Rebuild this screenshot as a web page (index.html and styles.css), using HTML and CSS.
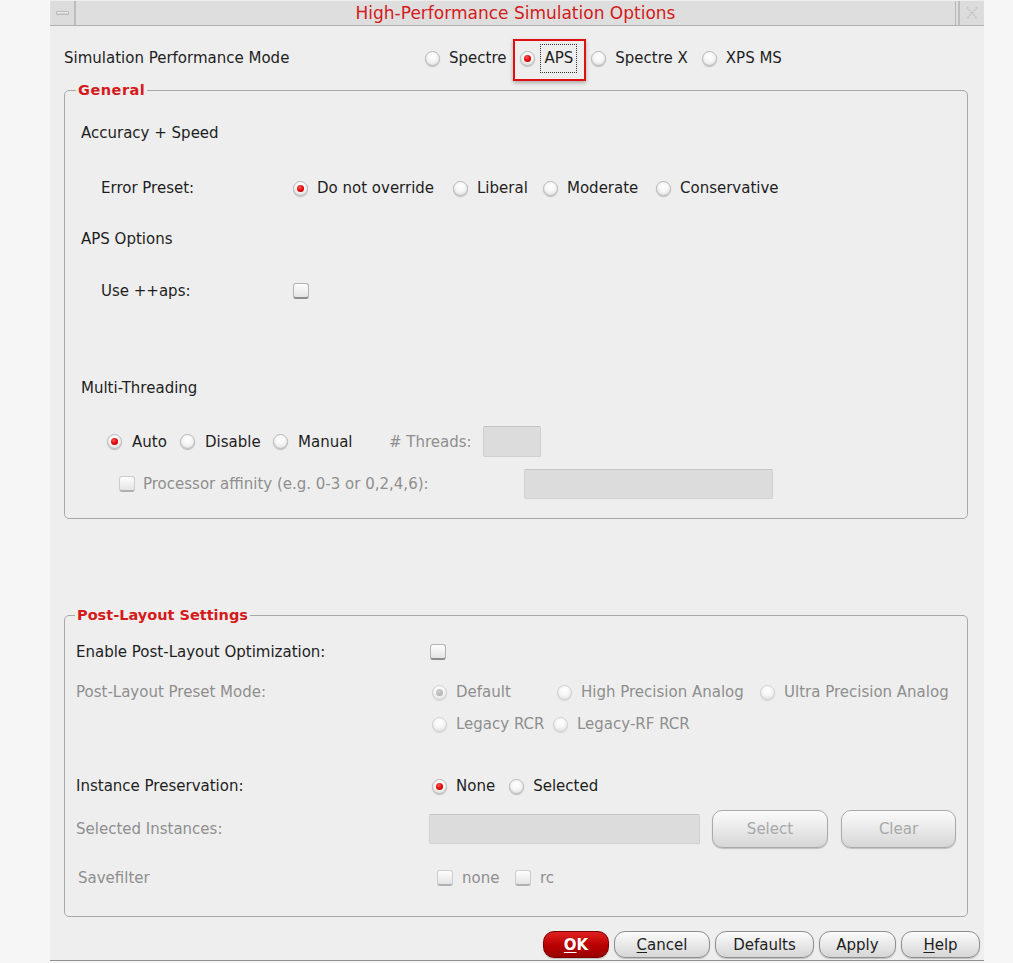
FILE: index.html
```html
<!DOCTYPE html>
<html lang="en">
<head>
    <meta charset="UTF-8">
    <title>High-Performance Simulation Options</title>
    <link rel="stylesheet" href="styles.css">
</head>
<body>

    <div class="window">

        <!-- Title bar -->
        <div class="titlebar">
            <div class="tb-btn tb-menu"><span class="tb-bar"></span></div>
            <div class="tb-title">High-Performance Simulation Options</div>
            <div class="tb-btn tb-close">
                <svg width="22" height="22" viewBox="0 0 22 22">
                    <path d="M6 5 L10.5 11 L6 17 M16 5 L11.5 11 L16 17" fill="none" stroke="#c4c4c4" stroke-width="1.6" stroke-dasharray="2 1"/>
                </svg>
            </div>
        </div>

        <div class="content">

            <!-- Mode selection -->
            <div class="mode-row">
                <span class="mode-label">Simulation Performance Mode</span>
                <div class="choices gap14">
                    <span class="opt"><span class="radio"></span>Spectre</span>
                    <span class="opt mark">
                        <span class="radio on"></span><span class="focus">APS</span>
                        <span class="mark-box"></span>
                    </span>
                    <span class="opt"><span class="radio"></span>Spectre X</span>
                    <span class="opt"><span class="radio"></span>XPS MS</span>
                </div>
            </div>

            <!-- General -->
            <fieldset class="group general">
                <legend>General</legend>

                <div class="row r-acc">Accuracy + Speed</div>

                <div class="row r-err">
                    <span class="sub-label">Error Preset:</span>
                    <div class="choices">
                        <span class="opt w-dno"><span class="radio on"></span>Do not override</span>
                        <span class="opt w-lib"><span class="radio"></span>Liberal</span>
                        <span class="opt w-mod"><span class="radio"></span>Moderate</span>
                        <span class="opt"><span class="radio"></span>Conservative</span>
                    </div>
                </div>

                <div class="row r-aps">APS Options</div>

                <div class="row r-use">
                    <span class="sub-label">Use ++aps:</span>
                    <span class="check"></span>
                </div>

                <div class="row r-mt">Multi-Threading</div>

                <div class="row r-thr">
                    <span class="opt w-auto"><span class="radio on"></span>Auto</span>
                    <span class="opt w-dis"><span class="radio"></span>Disable</span>
                    <span class="opt w-man"><span class="radio"></span>Manual</span>
                    <span class="muted thr-label"># Threads:</span>
                    <span class="field thr-field"></span>
                </div>

                <div class="row r-aff">
                    <span class="opt muted aff-label"><span class="check dim"></span>Processor affinity (e.g. 0-3 or 0,2,4,6):</span>
                    <span class="field aff-field"></span>
                </div>
            </fieldset>

            <!-- Post-Layout -->
            <fieldset class="group post">
                <legend>Post-Layout Settings</legend>

                <div class="prow p-enable">
                    <span>Enable Post-Layout Optimization:</span>
                    <span class="check ctl-check"></span>
                </div>

                <div class="prow p-preset">
                    <span class="muted">Post-Layout Preset Mode:</span>
                    <div class="preset-grid muted">
                        <div class="choices">
                            <span class="opt w-def"><span class="radio dis on"></span>Default</span>
                            <span class="opt w-hpa"><span class="radio dis"></span>High Precision Analog</span>
                            <span class="opt"><span class="radio dis"></span>Ultra Precision Analog</span>
                        </div>
                        <div class="choices">
                            <span class="opt w-rcr"><span class="radio dis"></span>Legacy RCR</span>
                            <span class="opt"><span class="radio dis"></span>Legacy-RF RCR</span>
                        </div>
                    </div>
                </div>

                <div class="prow p-inst">
                    <span>Instance Preservation:</span>
                    <div class="choices ctl-radios gap14">
                        <span class="opt"><span class="radio on"></span>None</span>
                        <span class="opt"><span class="radio"></span>Selected</span>
                    </div>
                </div>

                <div class="prow p-sel">
                    <span class="muted">Selected Instances:</span>
                    <div class="sel-ctl">
                        <span class="field sel-field"></span>
                        <button class="btn dis w-select">Select</button>
                        <button class="btn dis w-clear">Clear</button>
                    </div>
                </div>

                <div class="prow p-save">
                    <span class="muted save-label">Savefilter</span>
                    <div class="choices muted save-ctl">
                        <span class="opt w-none"><span class="check dim"></span>none</span>
                        <span class="opt"><span class="check dim"></span>rc</span>
                    </div>
                </div>
            </fieldset>
        </div>

        <!-- Dialog buttons -->
        <div class="footer">
            <button class="btn ok"><u>O</u>K</button>
            <button class="btn w-cancel"><u>C</u>ancel</button>
            <button class="btn w-defaults">Defaults</button>
            <button class="btn w-apply">Apply</button>
            <button class="btn w-help"><u>H</u>elp</button>
        </div>
    </div>

</body>
</html>
```

FILE: styles.css
```css
/* Reset */
* {
    margin: 0;
    padding: 0;
    box-sizing: border-box;
}

:root {
    --bg-outer: #f6f6f6;
    --bg-window: #eeeeee;
    --text: #1e1e1e;
    --muted: #8e8e8e;
    --red: #d41a1a;
    --line: #a9a9a9;
}

body {
    font-family: "DejaVu Sans", sans-serif;
    font-size: 15px;
    color: var(--text);
    background: var(--bg-outer);
    height: 963px;
    overflow: hidden;
}

/* Window frame */
.window {
    margin-left: 50px;
    width: 934px;
    height: 961px;
    background: var(--bg-window);
    border-bottom: 1px solid #8f8f8f;
    display: flex;
    flex-direction: column;
}

/* Title bar */
.titlebar {
    display: flex;
    height: 25px;
    margin-top: 1px;
    border-bottom: 1px solid #b0b0b0;
    background: #dedede;
}

.tb-btn {
    width: 25px;
    height: 24px;
    display: flex;
    align-items: center;
    justify-content: center;
    background: #dcdcdc;
}

.tb-menu {
    border-right: 2px solid #bdbdbd;
    margin-left: 1px;
}

.tb-bar {
    width: 13px;
    height: 4px;
    border-radius: 1px;
    background: linear-gradient(#f4f4f4, #c6c6c6);
    border: 1px solid #bbbbbb;
}

.tb-close {
    border-left: 2px solid #bdbdbd;
    margin-right: 1px;
    margin-left: 2px;
}

.tb-title {
    flex: 1;
    text-align: center;
    color: var(--red);
    font-size: 17px;
    line-height: 24px;
    border-right: 1px solid #b6b6b6;
}

/* Content */
.content {
    padding: 0 16px 0 14px;
}

.mode-row {
    display: flex;
    align-items: center;
    height: 24px;
    margin-top: 20px;
}

.mode-label {
    width: 361px;
}

.choices {
    display: flex;
    align-items: center;
}

.gap14 {
    gap: 14px;
}

.opt {
    display: inline-flex;
    align-items: center;
    gap: 9px;
    white-space: nowrap;
}

.muted {
    color: var(--muted);
}

/* Radio buttons */
.radio {
    position: relative;
    flex: none;
    width: 15px;
    height: 15px;
    border-radius: 50%;
    border: 1px solid #b8b8b8;
    background: radial-gradient(circle at 50% 35%, #ffffff 0, #f6f6f6 45%, #d9d9d9 100%);
    box-shadow: 0 1px 1px rgba(0, 0, 0, 0.22);
}

.radio.on::after {
    content: "";
    position: absolute;
    left: 3px;
    top: 3px;
    width: 7px;
    height: 7px;
    border-radius: 50%;
    background: radial-gradient(circle at 40% 35%, #ff5a5a 0, #e00000 55%, #a30000 100%);
}

.radio.dis {
    border-color: #cfcfcf;
    box-shadow: 0 1px 1px rgba(0, 0, 0, 0.1);
}

.radio.dis.on::after {
    background: radial-gradient(circle at 40% 35%, #d0d0d0 0, #a6a6a6 100%);
}

/* Checkboxes */
.check {
    flex: none;
    width: 16px;
    height: 16px;
    border-radius: 3px;
    border: 1px solid #b4b4b4;
    border-bottom: 2px solid #8c8c8c;
    background: linear-gradient(#fdfdfd, #e4e4e4);
}

.check.dim {
    border-color: #cdcdcd;
    border-bottom-color: #b0b0b0;
}

/* Focus + annotation box around APS */
.mark {
    position: relative;
    gap: 5px;
}

.focus {
    display: inline-block;
    height: 29px;
    line-height: 27px;
    padding: 0 3px;
    border: 1px dotted #333333;
}

.mark-box {
    position: absolute;
    left: -7px;
    right: -9px;
    top: -5px;
    bottom: -8px;
    border: 2px solid #e01010;
    box-shadow: 0 2px 4px rgba(0, 0, 0, 0.28);
}

/* Group boxes */
.group {
    border: 1px solid var(--line);
    border-radius: 5px;
    min-width: 0;
}

.group legend {
    color: var(--red);
    font-weight: bold;
    font-size: 14.5px;
    line-height: 18px;
    padding: 0 2px;
}

.general {
    margin-top: 11px;
    padding: 0 0 19px 16px;
}

.general legend {
    margin-left: -5px;
    letter-spacing: 0.5px;
}

.row {
    display: flex;
    align-items: center;
    height: 24px;
}

.sub-label {
    width: 192px;
    margin-left: 20px;
}

.r-acc { margin-top: 22px; }
.r-err { margin-top: 31px; }
.r-aps { margin-top: 27px; }
.r-use { margin-top: 28px; }
.r-mt  { margin-top: 73px; }

.r-thr {
    margin-top: 26px;
    height: 31px;
    padding-left: 26px;
}

.r-aff {
    margin-top: 12px;
    height: 30px;
    padding-left: 38px;
}

.w-dno { width: 160px; }
.w-lib { width: 90px; }
.w-mod { width: 113px; }

.w-auto { width: 73px; }
.w-dis  { width: 93px; }
.w-man  { width: 116px; }

.r-thr .opt { gap: 10px; }

.thr-label {
    width: 94px;
}

.field {
    display: block;
    background: #dcdcdc;
    border: 1px solid #d0d0d0;
    border-top-color: #c4c4c4;
    border-radius: 2px;
}

.thr-field {
    width: 58px;
    height: 31px;
}

.aff-label {
    width: 405px;
    gap: 8px;
}

.aff-field {
    width: 249px;
    height: 30px;
}

/* Post-Layout group */
.post {
    margin-top: 87px;
    padding: 0 0 26px 11px;
}

.post legend {
    margin-left: -1px;
}

.prow {
    display: grid;
    grid-template-columns: 353px 1fr;
    align-items: center;
    min-height: 24px;
}

.p-enable { margin-top: 16px; }

.ctl-check {
    margin-left: 1px;
}

.p-preset {
    margin-top: 16px;
    align-items: start;
}

.p-preset > span {
    line-height: 24px;
}

.preset-grid {
    display: flex;
    flex-direction: column;
    gap: 8px;
    padding-left: 3px;
}

.preset-grid .choices {
    height: 24px;
}

.w-def { width: 125px; }
.w-hpa { width: 203px; }
.w-rcr { width: 121px; }

.p-inst { margin-top: 38px; }

.ctl-radios {
    padding-left: 3px;
}

.p-sel {
    margin-top: 12px;
    height: 38px;
}

.sel-ctl {
    display: flex;
    align-items: center;
    gap: 12px;
}

.sel-field {
    width: 271px;
    height: 30px;
}

.p-save { margin-top: 18px; }

.save-label {
    padding-left: 2px;
}

.save-ctl {
    padding-left: 8px;
    gap: 0;
}

.save-ctl .opt { gap: 9px; }
.w-none { width: 78px; }

/* Buttons */
.btn {
    font-family: inherit;
    font-size: 15px;
    color: var(--text);
    height: 27px;
    border: 1px solid #8e8e8e;
    border-radius: 11px;
    background: linear-gradient(#fbfbfb, #e9e9e9 50%, #d6d6d6);
    box-shadow: 0 1px 1px rgba(0, 0, 0, 0.2);
}

.btn.dis {
    height: 38px;
    color: #a8a8a8;
    border-color: #aaaaaa;
    border-radius: 10px;
}

.w-select { width: 116px; }
.w-clear  { width: 115px; margin-left: 1px; }

.footer {
    display: flex;
    justify-content: flex-end;
    gap: 5px;
    margin-top: 14px;
    padding-right: 4px;
}

.btn.ok {
    width: 66px;
    color: #ffffff;
    font-weight: bold;
    border-color: #7a0000;
    background: linear-gradient(#e02020, #b80000 55%, #9a0000);
}

.w-cancel   { width: 96px; }
.w-defaults { width: 99px; }
.w-apply    { width: 77px; }
.w-help     { width: 79px; }

.btn u {
    text-underline-offset: 2px;
}
```
